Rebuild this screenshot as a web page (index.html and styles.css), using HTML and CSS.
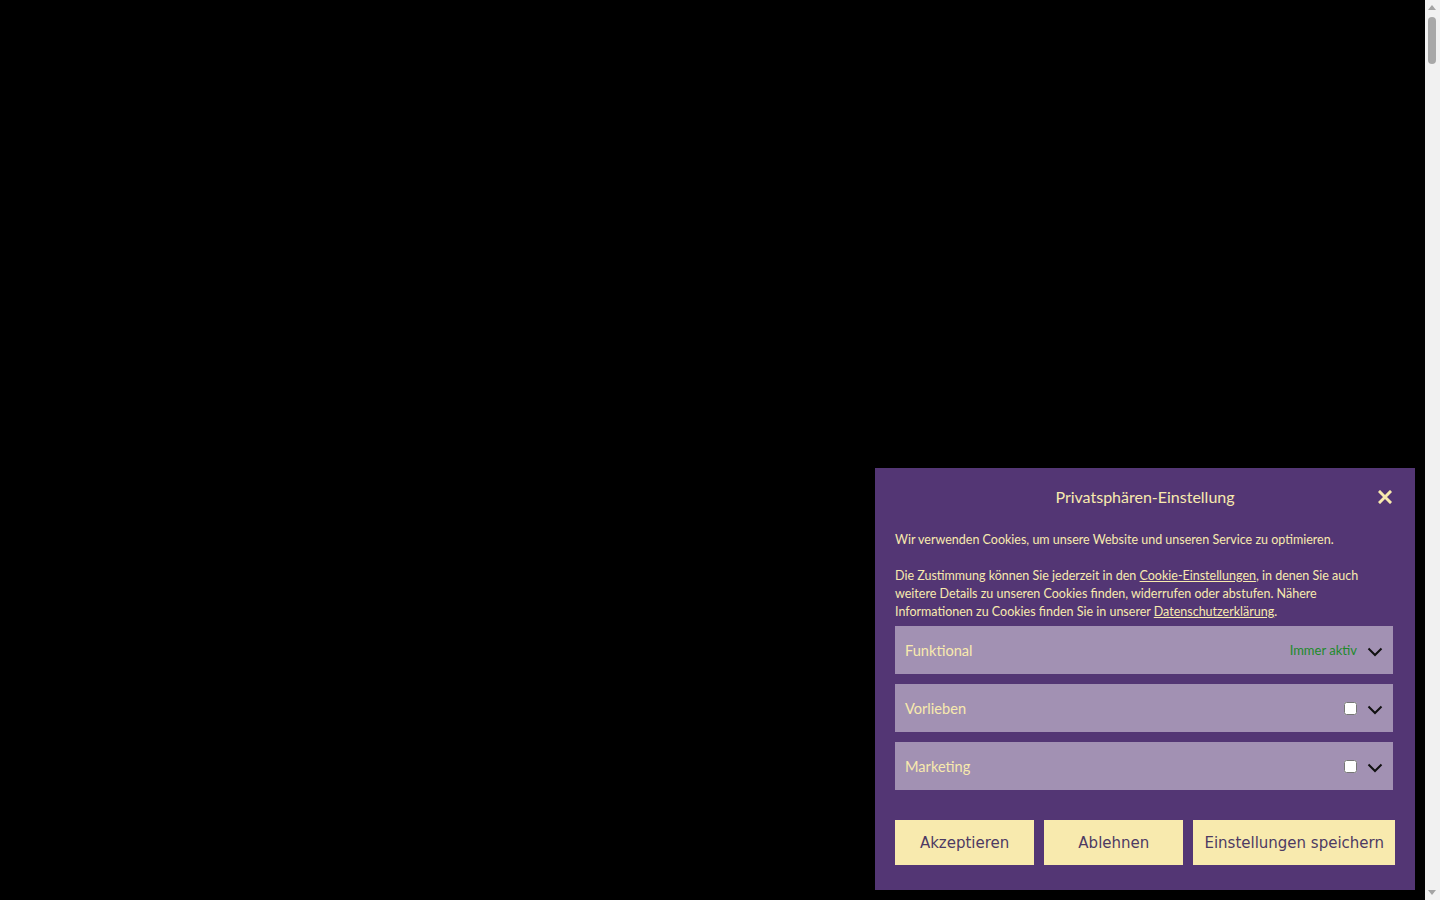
FILE: index.html
```html
<!DOCTYPE html>
<html lang="de">
<head>
<meta charset="utf-8">
<title>Privatsphären-Einstellung</title>
<link rel="stylesheet" href="styles.css">
</head>
<body>
<div class="scrollbar" aria-hidden="true">
  <span class="arrow up"></span>
  <span class="thumb"></span>
  <span class="arrow down"></span>
</div>
<div class="banner">
  <div class="header">
    <div class="title">Privatsphären-Einstellung</div>
    <button class="close" aria-label="Schließen">
      <svg width="14" height="14" viewBox="0 0 14 14"><path d="M2 2 L12 12 M12 2 L2 12" stroke="#f8eaae" stroke-width="3" stroke-linecap="square"/></svg>
    </button>
  </div>
  <div class="text">
    <p>Wir verwenden Cookies, um unsere Website und unseren Service zu optimieren.</p>
    <p>Die Zustimmung können Sie jederzeit in den <a href="#">Cookie-Einstellungen</a>, in denen Sie auch weitere Details zu unseren Cookies finden, widerrufen oder abstufen. Nähere Informationen zu Cookies finden Sie in unserer <a href="#">Datenschutzerklärung</a>.</p>
  </div>
  <div class="cats">
    <div class="cat">
      <span class="cat-name">Funktional</span>
      <span class="cat-right"><span class="always">Immer aktiv</span>
        <svg class="chev" width="16" height="10" viewBox="0 0 16 10"><path d="M1.5 1.5 L8 8 L14.5 1.5" fill="none" stroke="#111" stroke-width="2"/></svg></span>
    </div>
    <div class="cat">
      <span class="cat-name">Vorlieben</span>
      <span class="cat-right"><input type="checkbox" class="chk">
        <svg class="chev" width="16" height="10" viewBox="0 0 16 10"><path d="M1.5 1.5 L8 8 L14.5 1.5" fill="none" stroke="#111" stroke-width="2"/></svg></span>
    </div>
    <div class="cat">
      <span class="cat-name">Marketing</span>
      <span class="cat-right"><input type="checkbox" class="chk">
        <svg class="chev" width="16" height="10" viewBox="0 0 16 10"><path d="M1.5 1.5 L8 8 L14.5 1.5" fill="none" stroke="#111" stroke-width="2"/></svg></span>
    </div>
  </div>
  <div class="buttons">
    <button class="btn">Akzeptieren</button>
    <button class="btn">Ablehnen</button>
    <button class="btn">Einstellungen speichern</button>
  </div>
</div>
</body>
</html>
```
FILE: styles.css
```css
html, body {
  margin: 0;
  padding: 0;
  height: 100%;
  background: #000;
  overflow: hidden;
}
.scrollbar {
  position: fixed;
  top: 0;
  right: 0;
  bottom: 0;
  width: 15px;
  background: #f1f1f1;
}
.thumb {
  position: absolute;
  left: 3px;
  top: 17px;
  width: 8px;
  height: 47px;
  border-radius: 4px;
  background: #a8a8a8;
}
.arrow {
  position: absolute;
  left: 3px;
  width: 0;
  height: 0;
  border-left: 4px solid transparent;
  border-right: 4px solid transparent;
}
.arrow.up {
  top: 5px;
  border-bottom: 5px solid #a3a3a3;
}
.arrow.down {
  bottom: 5px;
  border-top: 5px solid #a3a3a3;
}
.banner {
  position: fixed;
  right: 25px;
  bottom: 10px;
  width: 540px;
  box-sizing: border-box;
  background: #533674;
  color: #f8eaae;
  padding: 19px 20px 25px 20px;
  font-family: Lato, "Noto Sans", sans-serif;
}
.header {
  display: flex;
  justify-content: center;
  align-items: center;
  position: relative;
  height: 20px;
}
.title {
  font-size: 16px;
  line-height: 20px;
}
.close {
  position: absolute;
  right: 3px;
  top: 3px;
  background: none;
  border: 0;
  padding: 0;
  width: 14px;
  height: 14px;
  display: flex;
}
.text {
  margin-top: 24px;
  font-size: 12.5px;
  line-height: 18px;
}
.text p {
  margin: 0 0 18px 0;
}
.text p:last-child {
  margin-bottom: 5px;
}
.text a {
  color: #f8eaae;
  text-decoration: underline;
}
.cats {
  display: flex;
  flex-direction: column;
  gap: 10px;
  margin-right: 2px;
}
.cat {
  height: 48px;
  background: #a291b3;
  display: flex;
  align-items: center;
  justify-content: space-between;
  padding: 0 10px;
}
.cat-name {
  font-size: 14.6px;
  color: #f8eaae;
}
.cat-right {
  display: flex;
  align-items: center;
  gap: 10px;
}
.always {
  font-size: 13px;
  color: #1e8a2b;
}
.chk {
  margin: 0;
  width: 13px;
  height: 13px;
}
.chev {
  margin-top: 4px;
}
.buttons {
  margin-top: 30px;
  display: grid;
  grid-template-columns: 1fr 1fr auto;
  gap: 10px;
}
.btn {
  height: 45px;
  background: #f8eaae;
  color: #4d3a63;
  border: 0;
  font-family: "DejaVu Sans", sans-serif;
  font-size: 15px;
  padding: 0 11px;
}
```
